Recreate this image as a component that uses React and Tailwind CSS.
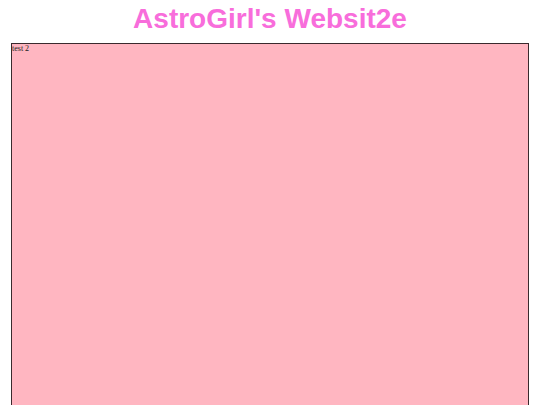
export default function App() {
  return (
    <div className="h-[405px] overflow-hidden bg-white">
      <h1 className="text-center font-bold text-[28px] leading-none pt-[5px] text-[#f86ddb] font-['Liberation_Sans',Arial,sans-serif]">
        AstroGirl's Websit2e
      </h1>
      <div className="mx-[11px] mt-[10px] h-[372px] border border-[#3a2a2e] bg-[#ffb6c1]">
        <p className="text-[8px] leading-[10px] text-[#222] font-['Liberation_Serif','Times_New_Roman',serif]">
          test 2
        </p>
      </div>
    </div>
  );
}
